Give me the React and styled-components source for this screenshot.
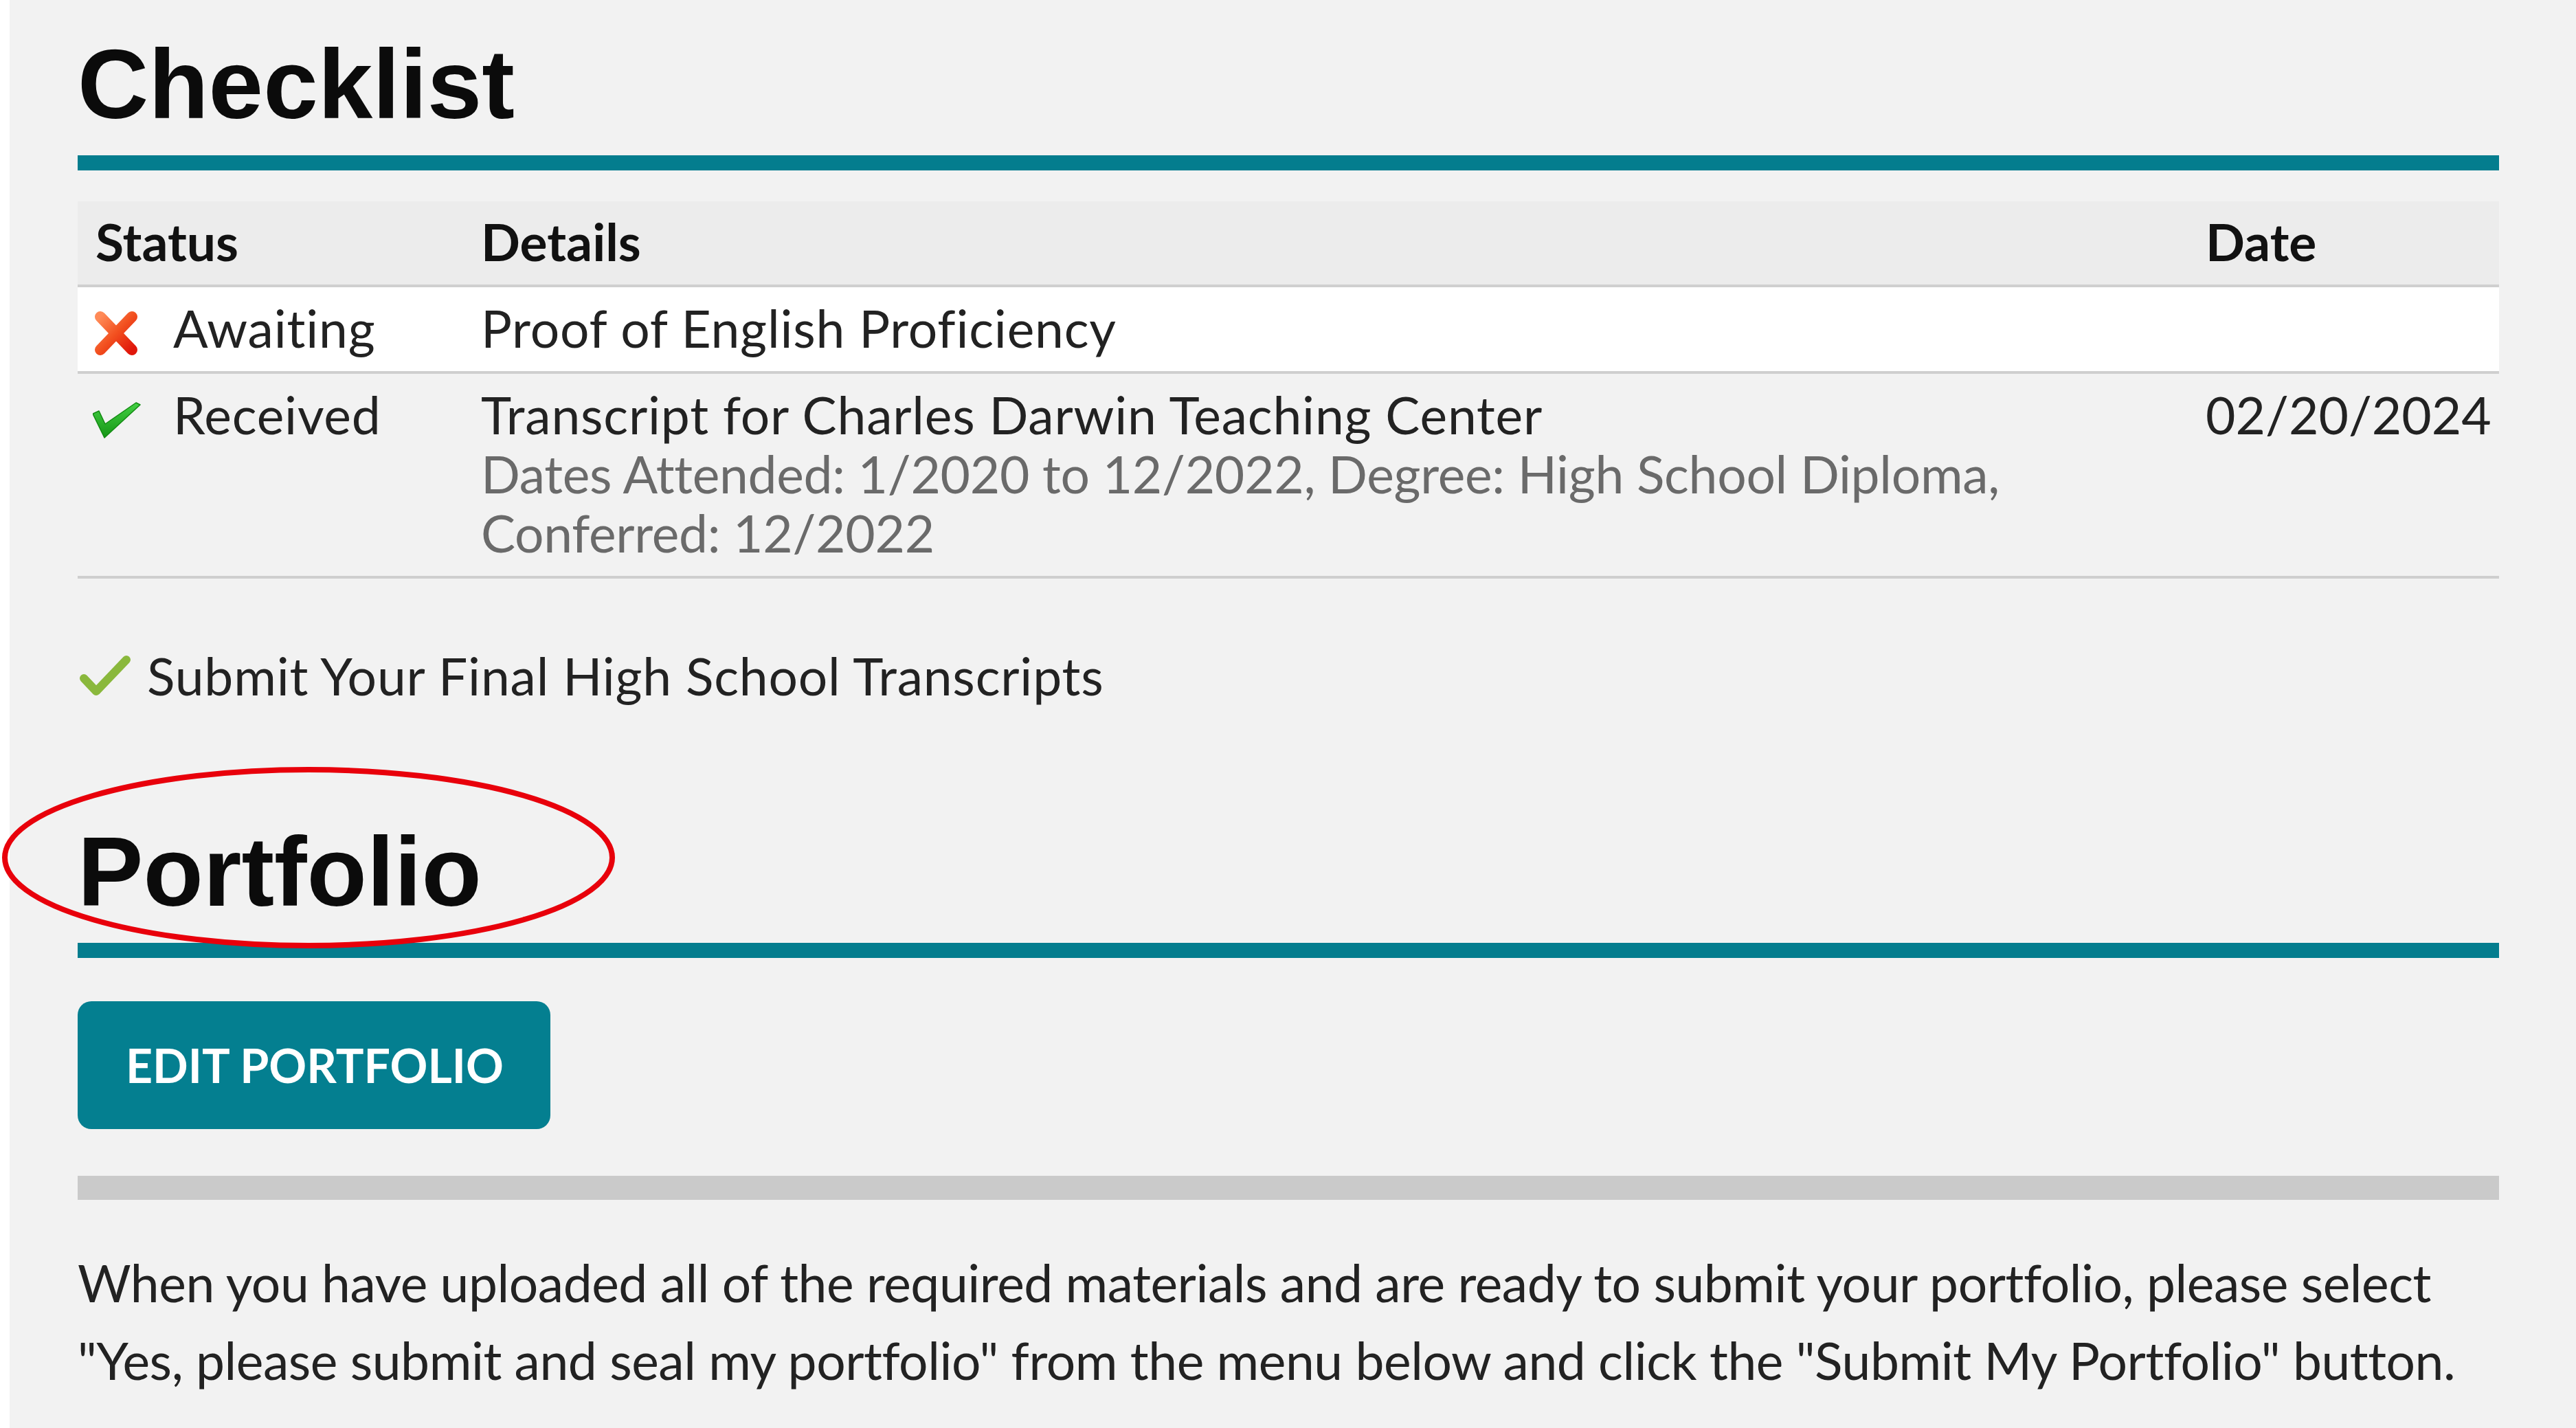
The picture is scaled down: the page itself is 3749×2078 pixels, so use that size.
import styled, { createGlobalStyle } from 'styled-components';

const GlobalStyle = createGlobalStyle`
  html, body {
    margin: 0;
    padding: 0;
    background: #fff;
  }
  body {
    font-family: Lato, "Open Sans", sans-serif;
    color: #222;
  }
  * {
    box-sizing: border-box;
  }
`;

const Main = styled.main`
  margin-left: 14px;
  min-height: 100vh;
  background: #f2f2f2;
  padding: 52px 112px 40px 99px;
`;

const Heading = styled.h1`
  margin: ${(p) => p.$top || 0}px 0 32px;
  font-family: "Liberation Sans", Arial, sans-serif;
  font-weight: 700;
  font-size: 143px;
  line-height: 142px;
  color: #0b0b0b;
`;

const Rule = styled.div`
  height: 22px;
  background: #047d8e;
  margin-bottom: ${(p) => p.$gap}px;
`;

const Table = styled.div`
  display: grid;
  grid-template-columns: 574px 1fr 440px;
`;

const HeadCell = styled.div`
  background: #ececec;
  border-bottom: 4px solid #cfcfcf;
  padding: 15px 13px 20px;
  padding-left: ${(p) => (p.$first ? 26 : 13)}px;
  font-weight: 700;
  font-size: 75px;
  line-height: 86px;
  color: #111;
`;

const Cell = styled.div`
  background: ${(p) => (p.$white ? '#fff' : 'transparent')};
  border-bottom: 4px solid #cfcfcf;
  padding: 16px 13px 20px;
  font-size: 75px;
  line-height: 86px;
  letter-spacing: ${(p) => (p.$plain ? 0 : 0.8)}px;
  color: #222;
`;

const StatusCell = styled(Cell)`
  display: flex;
  align-items: flex-start;
  padding-left: 22px;
`;

const IconSlot = styled.span`
  display: flex;
  width: 117px;
  flex: none;
  padding-top: ${(p) => p.$offset}px;
`;

const SubLine = styled.div`
  color: #6a6a6a;
  letter-spacing: -0.3px;
`;

const Task = styled.div`
  display: flex;
  align-items: flex-start;
  margin-top: 98px;
  font-size: 75px;
  line-height: 86px;
  letter-spacing: 0.8px;
  color: #222;
`;

const TaskIcon = styled.span`
  display: flex;
  flex: none;
  width: 80px;
  margin: 10px 22px 0 -1px;
`;

const HeadingWrap = styled.div`
  position: relative;
`;

const Circle = styled.svg`
  position: absolute;
  left: -112px;
  top: -82px;
  pointer-events: none;
`;

const Button = styled.button`
  display: inline-block;
  margin-top: 63px;
  padding: 52px 68px 52px 70px;
  border: none;
  border-radius: 20px;
  background: #047f90;
  color: #fff;
  font-family: Lato, sans-serif;
  font-weight: 700;
  font-size: 68px;
  line-height: 82px;
  cursor: pointer;
`;

const Divider = styled.div`
  height: 35px;
  margin-top: 68px;
  background: #cacaca;
`;

const Note = styled.p`
  margin: 64px 0 0;
  font-size: 75px;
  line-height: 113px;
  letter-spacing: -0.45px;
  color: #222;
`;

function CrossIcon() {
  return (
    <svg width="72" height="64" viewBox="0 0 72 64">
      <defs>
        <linearGradient id="xg" x1="0" y1="0" x2="1" y2="1">
          <stop offset="0" stopColor="#ff8a57" />
          <stop offset="0.5" stopColor="#f2501f" />
          <stop offset="1" stopColor="#e0170b" />
        </linearGradient>
      </defs>
      <g stroke="url(#xg)" strokeWidth="16" strokeLinecap="round">
        <line x1="11" y1="8" x2="57" y2="56" />
        <line x1="57" y1="8" x2="11" y2="56" />
      </g>
    </svg>
  );
}

function TickIcon() {
  return (
    <svg width="72" height="54" viewBox="0 0 72 54">
      <defs>
        <linearGradient id="tg" x1="0" y1="0" x2="0" y2="1">
          <stop offset="0" stopColor="#44d044" />
          <stop offset="1" stopColor="#159515" />
        </linearGradient>
      </defs>
      <polygon
        points="0,17 9,13 18,32 63,1 69,4 17,52"
        fill="url(#tg)"
        stroke="#128a12"
        strokeWidth="1.5"
        strokeLinejoin="round"
      />
    </svg>
  );
}

function CheckMark() {
  return (
    <svg width="80" height="64" viewBox="0 0 80 64">
      <polyline
        points="10,37 28,56 72,10"
        fill="none"
        stroke="#8ab83c"
        strokeWidth="12"
        strokeLinecap="round"
        strokeLinejoin="round"
      />
    </svg>
  );
}

const rows = [
  {
    status: 'Awaiting',
    icon: 'cross',
    title: 'Proof of English Proficiency',
    date: '',
    white: true,
  },
  {
    status: 'Received',
    icon: 'tick',
    title: 'Transcript for Charles Darwin Teaching Center',
    sub: 'Dates Attended: 1/2020 to 12/2022, Degree: High School Diploma, Conferred: 12/2022',
    date: '02/20/2024',
  },
];

export default function App() {
  return (
    <>
      <GlobalStyle />
      <Main>
        <Heading>Checklist</Heading>
        <Rule $gap={45} />
        <Table>
          <HeadCell $first>Status</HeadCell>
          <HeadCell>Details</HeadCell>
          <HeadCell>Date</HeadCell>
          {rows.map((r) => (
            <>
              <StatusCell key={r.status + 's'} $white={r.white}>
                <IconSlot $offset={r.icon === 'cross' ? 19 : 25}>
                  {r.icon === 'cross' ? <CrossIcon /> : <TickIcon />}
                </IconSlot>
                {r.status}
              </StatusCell>
              <Cell key={r.status + 'd'} $white={r.white}>
                {r.title}
                {r.sub && <SubLine>{r.sub}</SubLine>}
              </Cell>
              <Cell key={r.status + 't'} $white={r.white} $plain>
                {r.date}
              </Cell>
            </>
          ))}
        </Table>
        <Task>
          <TaskIcon>
            <CheckMark />
          </TaskIcon>
          Submit Your Final High School Transcripts
        </Task>
        <HeadingWrap>
          <Heading $top={172}>Portfolio</Heading>
          <Circle width="900" height="270" viewBox="0 0 900 270">
            <ellipse
              cx="448"
              cy="132"
              rx="442"
              ry="128"
              fill="none"
              stroke="#e8000b"
              strokeWidth="8"
            />
          </Circle>
        </HeadingWrap>
        <Rule $gap={0} />
        <Button>EDIT PORTFOLIO</Button>
        <Divider />
        <Note>
          When you have uploaded all of the required materials and are ready to submit your
          portfolio, please select "Yes, please submit and seal my portfolio" from the menu
          below and click the "Submit My Portfolio" button.
        </Note>
      </Main>
    </>
  );
}
